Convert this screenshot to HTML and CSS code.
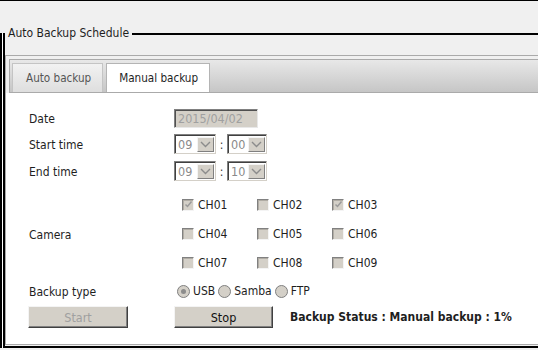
FILE: index.html
```html
<!DOCTYPE html>
<html lang="en">
  <head>
    <meta charset="UTF-8" />
    <meta name="viewport" content="width=device-width, initial-scale=1.0" />
    <title>Auto Backup Schedule</title>
    <link rel="stylesheet" href="styles.css">
  </head>
  <body>
    <fieldset class="schedule">
      <legend>Auto Backup Schedule</legend>
      <div class="panel">
        <div class="tabs">
          <div class="tab">Auto backup</div>
          <div class="tab active">Manual backup</div>
        </div>
        <div class="content">
          <div class="row row-date">
            <span class="label">Date</span>
            <div class="field">
              <span class="date-box">2015/04/02</span>
            </div>
          </div>
          <div class="row row-start">
            <span class="label">Start time</span>
            <div class="field">
              <div class="select">
                <span class="value">09</span>
                <span class="arrow"><svg width="13" height="9" viewBox="0 0 13 9"><path d="M2 2 L6.5 6.5 L11 2" fill="none" stroke="#8c8c8c" stroke-width="1.4"/></svg></span>
              </div>
              <span class="colon">:</span>
              <div class="select narrow">
                <span class="value">00</span>
                <span class="arrow"><svg width="13" height="9" viewBox="0 0 13 9"><path d="M2 2 L6.5 6.5 L11 2" fill="none" stroke="#8c8c8c" stroke-width="1.4"/></svg></span>
              </div>
            </div>
          </div>
          <div class="row row-end">
            <span class="label">End time</span>
            <div class="field">
              <div class="select">
                <span class="value">09</span>
                <span class="arrow"><svg width="13" height="9" viewBox="0 0 13 9"><path d="M2 2 L6.5 6.5 L11 2" fill="none" stroke="#8c8c8c" stroke-width="1.4"/></svg></span>
              </div>
              <span class="colon">:</span>
              <div class="select narrow">
                <span class="value">10</span>
                <span class="arrow"><svg width="13" height="9" viewBox="0 0 13 9"><path d="M2 2 L6.5 6.5 L11 2" fill="none" stroke="#8c8c8c" stroke-width="1.4"/></svg></span>
              </div>
            </div>
          </div>
          <div class="row row-camera">
            <span class="label">Camera</span>
            <div class="channels">
              <label class="channel"><span class="check on"><svg width="9" height="9" viewBox="0 0 9 9"><path d="M1.5 4.5 L3.5 6.5 L7.5 1.5" fill="none" stroke="#9a9a9a" stroke-width="1.5"/></svg></span>CH01</label>
              <label class="channel"><span class="check"></span>CH02</label>
              <label class="channel"><span class="check on"><svg width="9" height="9" viewBox="0 0 9 9"><path d="M1.5 4.5 L3.5 6.5 L7.5 1.5" fill="none" stroke="#9a9a9a" stroke-width="1.5"/></svg></span>CH03</label>
              <label class="channel"><span class="check"></span>CH04</label>
              <label class="channel"><span class="check"></span>CH05</label>
              <label class="channel"><span class="check"></span>CH06</label>
              <label class="channel"><span class="check"></span>CH07</label>
              <label class="channel"><span class="check"></span>CH08</label>
              <label class="channel"><span class="check"></span>CH09</label>
            </div>
          </div>
          <div class="row row-type">
            <span class="label">Backup type</span>
            <div class="field radios">
              <label class="radio"><span class="dot on"></span>USB</label>
              <label class="radio"><span class="dot"></span>Samba</label>
              <label class="radio"><span class="dot"></span>FTP</label>
            </div>
          </div>
          <div class="row row-actions">
            <div class="cell">
              <button class="btn" disabled>Start</button>
            </div>
            <div class="field">
              <button class="btn stop">Stop</button>
              <span class="status">Backup Status : Manual backup : 1%</span>
            </div>
          </div>
        </div>
      </div>
    </fieldset>
  </body>
</html>
```

FILE: styles.css
```css
html,
body {
  margin: 0;
  height: 350px;
  overflow: hidden;
}

body {
  background-color: #f0f0f0;
  border-top: 1px solid #000;
  font-family: "DejaVu Sans Condensed", "DejaVu Sans", sans-serif;
  font-size: 12px;
  color: #1e1e1e;
}

.schedule {
  width: 600px;
  margin: 25px 0 0 3px;
  padding: 0 0 1px 0;
  border: 2px solid #000;
  border-right: none;
  box-shadow: -1px 0 0 0 #fff, -3px 0 0 0 #000;
  min-width: 0;
}

.schedule legend {
  padding: 0 3px 0 3px;
  margin-left: 0;
  line-height: 15px;
  font-size: 12px;
  color: #1e1e1e;
}

.panel {
  margin-top: 14px;
  border: 1px solid #aaa;
  border-right: none;
}

.tabs {
  display: flex;
  gap: 3px;
  height: 29px;
  margin: 3px 0 0 3px;
  padding: 3px 0 0 2px;
  border: 1px solid #aaa;
  border-right: none;
  background: linear-gradient(#e8e8e8, #c6c6c6);
}

.tab {
  padding: 0 11px 0 13px;
  line-height: 29px;
  font-size: 11.6px;
  border: 1px solid #c4c4c4;
  border-bottom: none;
  background: linear-gradient(#f2f2f2, #dedede);
  color: #555;
}

.tab.active {
  padding: 0 11px 0 12px;
  background: #fff;
  border-color: #b4b4b4;
  color: #1e1e1e;
}

.content {
  background-color: #fff;
  padding: 15px 0 16px 23px;
}

.row {
  display: grid;
  grid-template-columns: 145px 1fr;
  align-items: center;
  height: 20px;
}

.label {
  padding-top: 2px;
}

.row-start {
  margin-top: 6px;
}

.row-end {
  margin-top: 7px;
}

.row-camera {
  margin-top: 9px;
  height: 87px;
}

.row-type {
  margin-top: 5px;
  height: 18px;
}

.row-actions {
  margin-top: 6px;
  height: 22px;
}

.field {
  display: flex;
  align-items: center;
}

.date-box {
  box-sizing: border-box;
  width: 84px;
  height: 19px;
  padding-left: 3px;
  border: 1px solid;
  border-color: #808080 #e8e8e8 #e8e8e8 #808080;
  box-shadow: inset 1px 1px 0 #505050;
  background-color: #d4d0c8;
  color: #a0a0a0;
  font-size: 12.5px;
  line-height: 18px;
}

.select {
  box-sizing: border-box;
  display: flex;
  align-items: center;
  width: 42px;
  height: 20px;
  border: 1px solid;
  border-color: #808080 #d4d0c8 #d4d0c8 #808080;
  box-shadow: inset 1px 1px 0 #404040;
  background-color: #fff;
}

.select.narrow {
  width: 40px;
}

.select .value {
  flex: 1;
  padding: 1px 0 0 3px;
  color: #8a8a8a;
  font-size: 12.5px;
}

.select .arrow {
  box-sizing: border-box;
  display: flex;
  align-items: center;
  justify-content: center;
  width: 17px;
  height: 15px;
  margin: 1px 1px 0 0;
  border: 1px solid;
  border-color: #f4f4f4 #808080 #808080 #f4f4f4;
  background-color: #d4d0c8;
}

.colon {
  width: 11px;
  padding-top: 2px;
  text-align: center;
  color: #333;
}

.channels {
  display: grid;
  grid-template-columns: 75px 75px 75px;
  grid-auto-rows: 29px;
  align-items: center;
}

.channel,
.radio {
  display: flex;
  align-items: center;
}

.check {
  box-sizing: border-box;
  display: flex;
  align-items: center;
  justify-content: center;
  width: 12px;
  height: 12px;
  margin: 0 4px 0 8px;
  border: 1px solid;
  border-color: #808080 #f4f4f4 #f4f4f4 #808080;
  box-shadow: inset 1px 1px 0 #b0aca4;
  background-color: #d4d0c8;
}

.radios {
  padding-left: 3px;
}

.dot {
  box-sizing: border-box;
  position: relative;
  width: 13px;
  height: 13px;
  margin-right: 3px;
  border: 1px solid #808080;
  border-radius: 50%;
  background-color: #d4d0c8;
}

.dot.on::after {
  content: "";
  position: absolute;
  top: 3px;
  left: 3px;
  width: 5px;
  height: 5px;
  border-radius: 50%;
  background-color: #8c8c8c;
}

.radio + .radio {
  margin-left: 3px;
}

.btn {
  box-sizing: border-box;
  height: 22px;
  padding: 0;
  border: 1px solid;
  border-color: #f4f4f4 #404040 #404040 #f4f4f4;
  box-shadow: inset -1px -1px 0 #808080;
  background-color: #d4d0c8;
  font-family: "DejaVu Sans Condensed", "DejaVu Sans", sans-serif;
  font-size: 12.5px;
  color: #111;
}

.cell .btn {
  width: 100px;
  margin-left: -1px;
}

.btn:disabled {
  color: #a0a0a0;
}

.btn.stop {
  width: 99px;
}

.status {
  margin-left: 17px;
  font-weight: bold;
  font-size: 12px;
  color: #1e1e1e;
}
```
